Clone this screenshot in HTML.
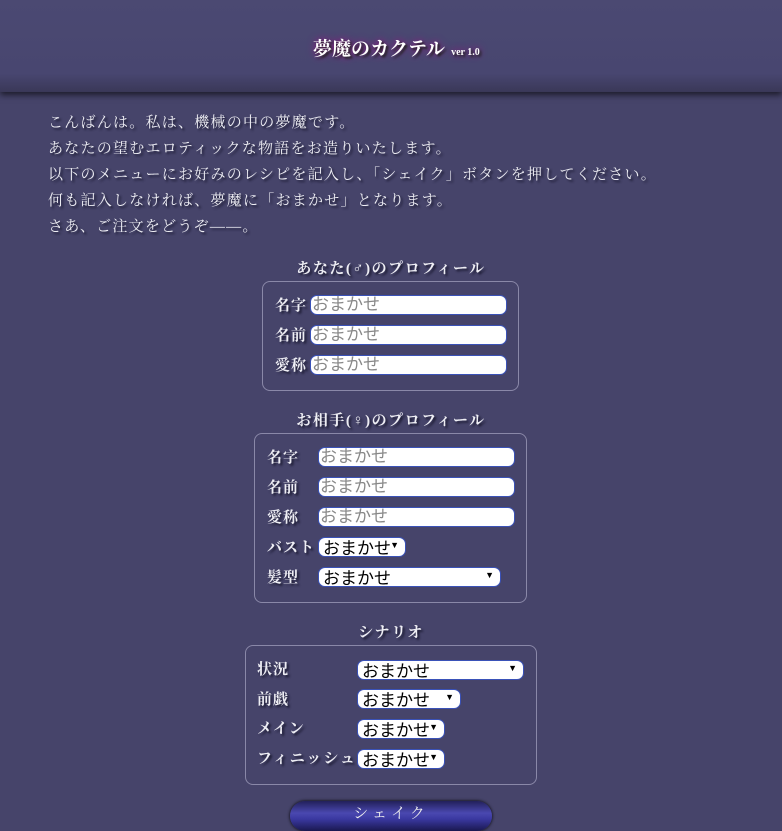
<!DOCTYPE html>
<html><head><meta charset="utf-8"><style>
body{margin:0;width:782px;height:825px;overflow:hidden;background:#46446a;font-family:"Liberation Serif","Noto Serif CJK SC",serif;color:#eeeef4;position:relative}
.hd{position:absolute;left:0;top:0;width:782px;height:92px;background:linear-gradient(#4b4972,#484670 80%,#3a3858);box-shadow:0 3px 6px rgba(0,0,0,.6)}
.hd .t{position:absolute;left:313px;top:34px;font-size:19px;font-weight:bold;color:#fff;text-shadow:2px 2px 2px #222,0 0 8px #a08}
.hd .t small{font-size:10px;margin-left:6px}
.a{position:absolute;white-space:nowrap;text-shadow:2px 2px 2px #1a1930}
.p{left:48px;font-size:15px;letter-spacing:1.25px}
.h{font-size:15px;font-weight:bold;transform:translateX(-50%);left:391px;letter-spacing:1.5px}
.box{position:absolute;border:1px solid #8a88a8;border-radius:8px}
.l{font-size:15px;font-weight:bold;letter-spacing:1px}
.in{position:absolute;background:#fff;border:1px solid #3a52b8;border-radius:7px;height:20px;box-sizing:border-box;font-family:"Liberation Sans","Noto Sans CJK JP",sans-serif;font-size:17px;line-height:18px;color:#888;padding-left:1px;overflow:hidden;white-space:nowrap}
.sel{color:#000;padding-left:4px;line-height:22px}
.sel:after{content:"▼";position:absolute;right:6px;top:0;font-size:9px;line-height:15px;color:#000}
.btn{position:absolute;left:290px;top:801px;width:202px;height:30px;border-radius:15px;background:linear-gradient(#22205a,#4a48b0 40%,#3a38a0 60%,#1a1850);box-shadow:0 0 3px #000;text-align:center;color:#eee;font-size:15px;line-height:26px;letter-spacing:4px}
</style></head><body>
<div class="hd"><div class="t">夢魔のカクテル<small>ver 1.0</small></div></div>
<div class="a p" style="top:111px">こんばんは。私は、機械の中の夢魔です。</div>
<div class="a p" style="top:137px">あなたの望むエロティックな物語をお造りいたします。</div>
<div class="a p" style="top:163px">以下のメニューにお好みのレシピを記入し、「シェイク」ボタンを押してください。</div>
<div class="a p" style="top:189px">何も記入しなければ、夢魔に「おまかせ」となります。</div>
<div class="a p" style="top:215px">さあ、ご注文をどうぞ——。</div>

<div class="a h" style="top:257px">あなた(♂)のプロフィール</div>
<div class="box" style="left:262px;top:281px;width:255px;height:108px"></div>
<div class="a l" style="left:275px;top:294px">名字</div><div class="in" style="left:310px;top:295px;width:197px">おまかせ</div>
<div class="a l" style="left:275px;top:324px">名前</div><div class="in" style="left:310px;top:325px;width:197px">おまかせ</div>
<div class="a l" style="left:275px;top:354px">愛称</div><div class="in" style="left:310px;top:355px;width:197px">おまかせ</div>

<div class="a h" style="top:409px">お相手(♀)のプロフィール</div>
<div class="box" style="left:254px;top:433px;width:271px;height:168px"></div>
<div class="a l" style="left:267px;top:446px">名字</div><div class="in" style="left:318px;top:447px;width:197px">おまかせ</div>
<div class="a l" style="left:267px;top:476px">名前</div><div class="in" style="left:318px;top:477px;width:197px">おまかせ</div>
<div class="a l" style="left:267px;top:506px">愛称</div><div class="in" style="left:318px;top:507px;width:197px">おまかせ</div>
<div class="a l" style="left:267px;top:536px">バスト</div><div class="in sel" style="left:318px;top:537px;width:88px">おまかせ</div>
<div class="a l" style="left:267px;top:566px">髪型</div><div class="in sel" style="left:318px;top:567px;width:183px">おまかせ</div>

<div class="a h" style="top:621px">シナリオ</div>
<div class="box" style="left:245px;top:645px;width:290px;height:138px"></div>
<div class="a l" style="left:257px;top:658px">状況</div><div class="in sel" style="left:357px;top:660px;width:167px">おまかせ</div>
<div class="a l" style="left:257px;top:688px">前戯</div><div class="in sel" style="left:357px;top:689px;width:104px">おまかせ</div>
<div class="a l" style="left:257px;top:717px">メイン</div><div class="in sel" style="left:357px;top:719px;width:88px">おまかせ</div>
<div class="a l" style="left:257px;top:747px;letter-spacing:2px">フィニッシュ</div><div class="in sel" style="left:357px;top:749px;width:88px">おまかせ</div>

<div class="btn">シェイク</div>
</body></html>
